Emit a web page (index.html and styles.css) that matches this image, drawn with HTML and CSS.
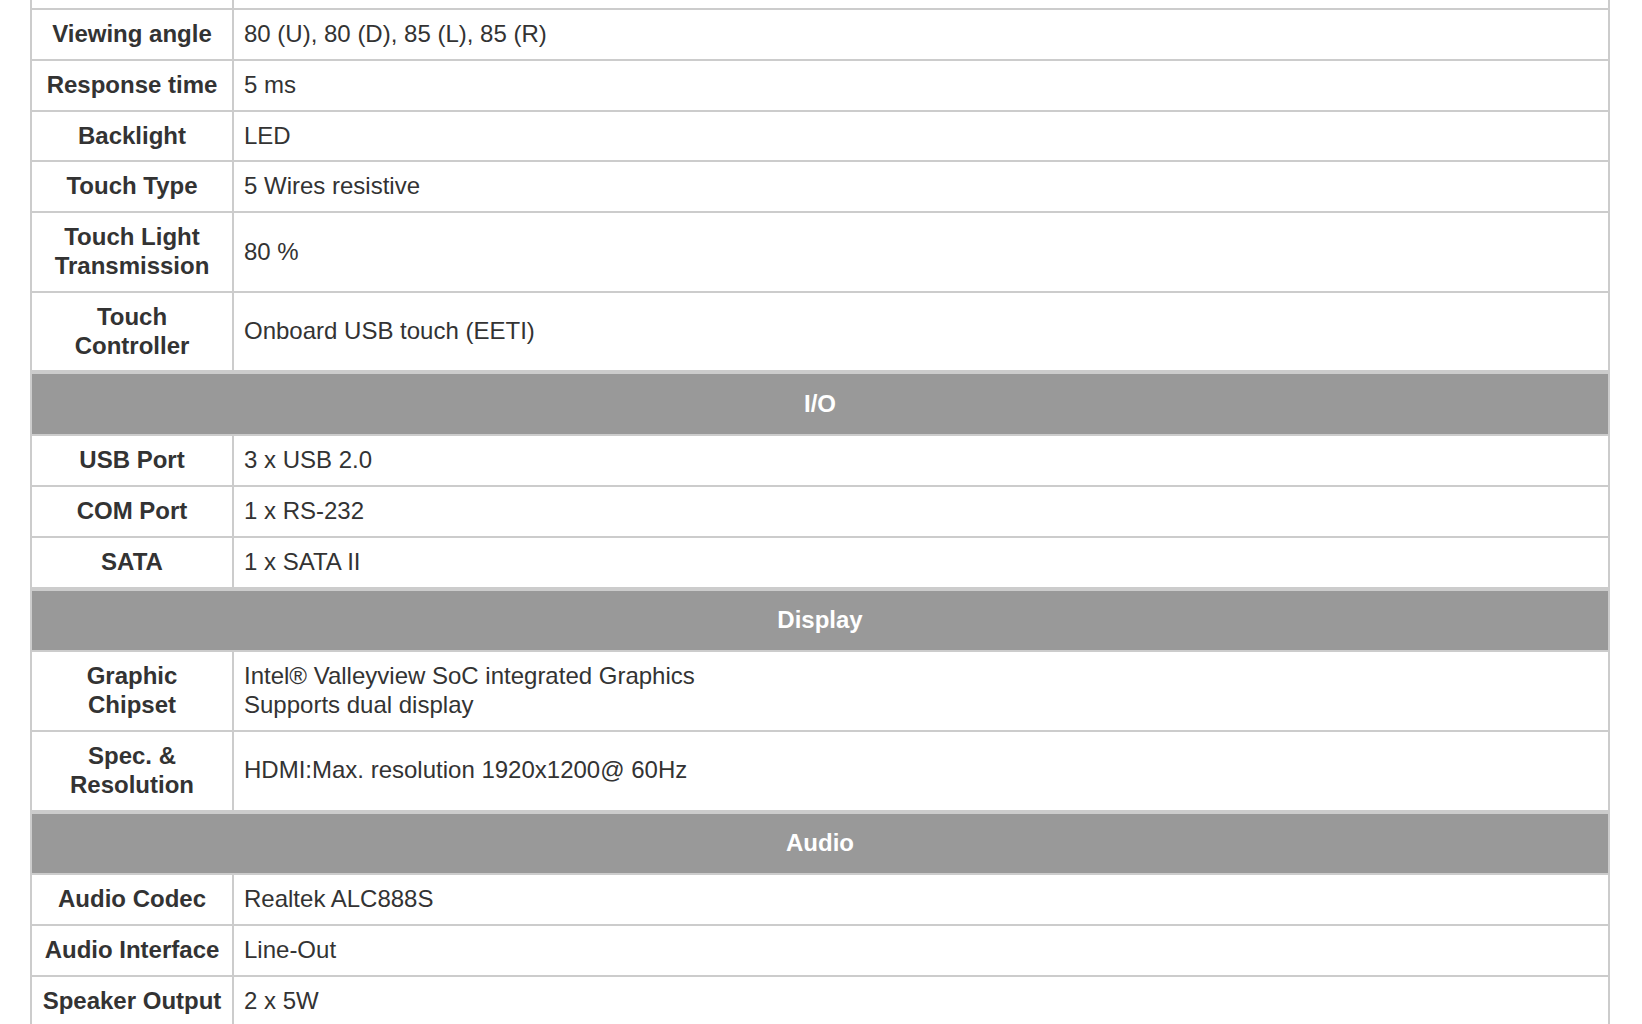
FILE: index.html
```html
<!DOCTYPE html>
<html lang="en">
<head>
<meta charset="utf-8">
<title>Specifications</title>
<link rel="stylesheet" href="styles.css">
</head>
<body>
<table class="spec">
  <colgroup>
    <col class="col-label">
    <col class="col-value">
  </colgroup>
  <tbody>
    <tr class="row-cut"><th></th><td></td></tr>
    <tr><th>Viewing angle</th><td>80 (U), 80 (D), 85 (L), 85 (R)</td></tr>
    <tr><th>Response time</th><td>5 ms</td></tr>
    <tr><th>Backlight</th><td>LED</td></tr>
    <tr><th>Touch Type</th><td>5 Wires resistive</td></tr>
    <tr><th>Touch Light<br>Transmission</th><td>80 %</td></tr>
    <tr><th>Touch<br>Controller</th><td>Onboard USB touch (EETI)</td></tr>
    <tr class="section"><th colspan="2">I/O</th></tr>
    <tr><th>USB Port</th><td>3 x USB 2.0</td></tr>
    <tr><th>COM Port</th><td>1 x RS-232</td></tr>
    <tr><th>SATA</th><td>1 x SATA II</td></tr>
    <tr class="section"><th colspan="2">Display</th></tr>
    <tr><th>Graphic<br>Chipset</th><td>Intel® Valleyview SoC integrated Graphics<br>Supports dual display</td></tr>
    <tr><th>Spec. &amp;<br>Resolution</th><td>HDMI:Max. resolution 1920x1200@ 60Hz</td></tr>
    <tr class="section"><th colspan="2">Audio</th></tr>
    <tr><th>Audio Codec</th><td>Realtek ALC888S</td></tr>
    <tr><th>Audio Interface</th><td>Line-Out</td></tr>
    <tr><th>Speaker Output</th><td>2 x 5W</td></tr>
  </tbody>
</table>
</body>
</html>
```
FILE: styles.css
```css
html, body {
  margin: 0;
  padding: 0;
  background: #ffffff;
}

body {
  font-family: "Liberation Sans", Arial, Helvetica, sans-serif;
  font-size: 24px;
  line-height: 28.8px;
  color: #333333;
}

.spec {
  width: 1580px;
  margin: 0 32px 0 30px;
  border-collapse: separate;
  border-spacing: 0;
  table-layout: fixed;
  border-left: 2px solid #cccccc;
}

.col-label {
  width: 202px;
}

.spec th,
.spec td {
  padding: 10px 10px;
  border-right: 2px solid #cccccc;
  border-bottom: 2px solid #cccccc;
  vertical-align: middle;
}

.spec th {
  font-weight: bold;
  text-align: center;
  white-space: nowrap;
}

.spec td {
  text-align: left;
  font-weight: normal;
}

.spec .row-cut th,
.spec .row-cut td {
  height: 8px;
  padding: 0;
}

.spec .section th {
  background: #999999;
  color: #ffffff;
  border-top: 2px solid #cccccc;
  padding: 15.5px 10px;
}
```
